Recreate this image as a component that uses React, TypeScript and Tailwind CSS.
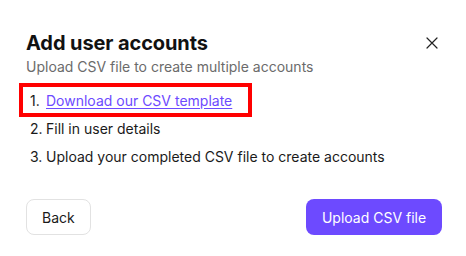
import React from "react";

export default function App() {
  const items: React.ReactNode[] = [
    <a href="#" className="text-[#6d4aff] underline underline-offset-2">
      Download our CSV template
    </a>,
    "Fill in user details",
    "Upload your completed CSV file to create accounts",
  ];
  return (
    <div
      className="w-[466px] h-[256px] bg-white relative"
      style={{ fontFamily: "Inter, 'Noto Sans', sans-serif" }}
    >
      <div className="pl-[26px] pr-[24px] pt-[31px]">
        <div className="flex items-start justify-between">
          <div>
            <h1 className="text-[20px] leading-[24px] font-bold text-[#111111] tracking-[-0.1px]">
              Add user accounts
            </h1>
            <p className="text-[14px] leading-[20px] text-[#6b6b6b] mt-[2px]">
              Upload CSV file to create multiple accounts
            </p>
          </div>
          <button className="mt-[4px] mr-[2px] w-[16px] h-[16px] flex items-center justify-center text-[#222222]">
            <svg width="14" height="14" viewBox="0 0 14 14" fill="none">
              <path d="M2 2L12 12M12 2L2 12" stroke="currentColor" strokeWidth="1.2" strokeLinecap="round" />
            </svg>
          </button>
        </div>

        <ol className="mt-[14px] pl-[4px] flex flex-col gap-[8px] text-[14px] leading-[20px] text-[#1a1a1a]">
          {items.map((content, i) => (
            <li key={i} className="relative flex">
              <span className="w-[16px] shrink-0">{i + 1}.</span>
              <span>{content}</span>
              {i === 0 && (
                <div className="absolute left-[-11px] top-[-8px] w-[233px] h-[34px] border-4 border-[#ff0000] pointer-events-none" />
              )}
            </li>
          ))}
        </ol>

        <div className="mt-[32px] flex items-center justify-between">
          <button className="h-[36px] px-[15px] rounded-[8px] border border-[#e2e2e2] bg-white text-[14px] text-[#1a1a1a]">
            Back
          </button>
          <button className="h-[36px] w-[136px] rounded-[8px] bg-[#6d4aff] text-[14px] text-white">
            Upload CSV file
          </button>
        </div>
      </div>
    </div>
  );
}
